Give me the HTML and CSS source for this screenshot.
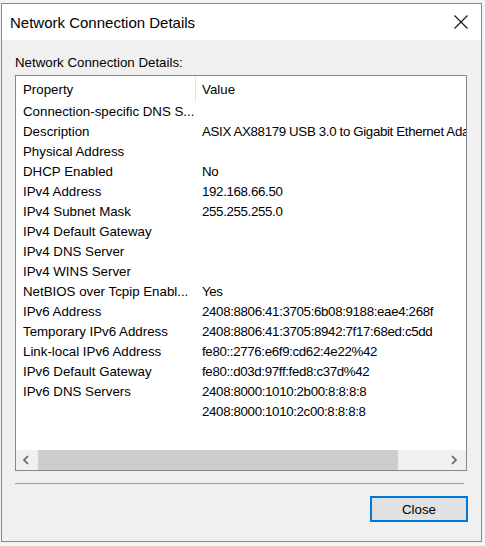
FILE: index.html
```html
<!DOCTYPE html>
<html>
<head>
<meta charset="utf-8">
<title>Network Connection Details</title>
<link rel="stylesheet" href="styles.css">
</head>
<body>
<div class="dialog">
  <div class="titlebar">
    <span class="title">Network Connection Details</span>
    <svg class="close-x" width="14" height="14" viewBox="0 0 14 14"><path d="M0.5 0.5 L13.5 13.5 M13.5 0.5 L0.5 13.5" stroke="#111" stroke-width="1.1" fill="none"/></svg>
  </div>
  <div class="content">
    <div class="label">Network Connection Details:</div>
    <div class="listbox">
      <div class="list">
        <div class="row header"><div class="c1">Property</div><div class="c2 hv">Value</div></div>
        <div class="row"><div class="c1">Connection-specific DNS S...</div><div class="c2"></div></div>
        <div class="row"><div class="c1">Description</div><div class="c2">ASIX AX88179 USB 3.0 to Gigabit Ethernet Adapter</div></div>
        <div class="row"><div class="c1">Physical Address</div><div class="c2"></div></div>
        <div class="row"><div class="c1">DHCP Enabled</div><div class="c2">No</div></div>
        <div class="row"><div class="c1">IPv4 Address</div><div class="c2">192.168.66.50</div></div>
        <div class="row"><div class="c1">IPv4 Subnet Mask</div><div class="c2">255.255.255.0</div></div>
        <div class="row"><div class="c1">IPv4 Default Gateway</div><div class="c2"></div></div>
        <div class="row"><div class="c1">IPv4 DNS Server</div><div class="c2"></div></div>
        <div class="row"><div class="c1">IPv4 WINS Server</div><div class="c2"></div></div>
        <div class="row"><div class="c1">NetBIOS over Tcpip Enabl...</div><div class="c2">Yes</div></div>
        <div class="row"><div class="c1">IPv6 Address</div><div class="c2">2408:8806:41:3705:6b08:9188:eae4:268f</div></div>
        <div class="row"><div class="c1">Temporary IPv6 Address</div><div class="c2">2408:8806:41:3705:8942:7f17:68ed:c5dd</div></div>
        <div class="row"><div class="c1">Link-local IPv6 Address</div><div class="c2">fe80::2776:e6f9:cd62:4e22%42</div></div>
        <div class="row"><div class="c1">IPv6 Default Gateway</div><div class="c2">fe80::d03d:97ff:fed8:c37d%42</div></div>
        <div class="row"><div class="c1">IPv6 DNS Servers</div><div class="c2">2408:8000:1010:2b00:8:8:8:8</div></div>
        <div class="row"><div class="c1"></div><div class="c2">2408:8000:1010:2c00:8:8:8:8</div></div>
      </div>
      <div class="hscroll">
        <div class="arrow left"><svg width="8" height="10" viewBox="0 0 8 10"><path d="M6 1 L2 5 L6 9" stroke="#606060" stroke-width="1.7" fill="none"/></svg></div>
        <div class="track"><div class="thumb"></div></div>
        <div class="arrow right"><svg width="8" height="10" viewBox="0 0 8 10"><path d="M2 1 L6 5 L2 9" stroke="#606060" stroke-width="1.7" fill="none"/></svg></div>
      </div>
    </div>
    <div class="sep"></div>
    <div class="actions"><button class="btn">Close</button></div>
  </div>
</div>
</body>
</html>
```

FILE: styles.css
```css
html, body {
  margin: 0;
  padding: 0;
}
body {
  background: #f3f3f3;
  width: 485px;
  height: 546px;
  overflow: hidden;
  font-family: "Liberation Sans", Arial, sans-serif;
  color: #000;
}
.dialog {
  box-sizing: border-box;
  margin: 3px 0 0 1px;
  width: 481px;
  height: 539px;
  border: 1px solid #888;
  background: #f0f0f0;
  display: flex;
  flex-direction: column;
}
.titlebar {
  height: 36px;
  flex: none;
  background: #fff;
  display: flex;
  align-items: center;
  justify-content: space-between;
  padding: 0 13px 0 8px;
}
.title {
  font-size: 15px;
  color: #000;
}
.close-x {
  display: block;
}
.content {
  flex: 1;
  display: flex;
  flex-direction: column;
  padding: 15px 13px 0 13px;
}
.label {
  font-size: 13.3px;
  line-height: 16px;
}
.listbox {
  box-sizing: border-box;
  margin-top: 4px;
  width: 452px;
  height: 396px;
  border: 1px solid #828790;
  background: #fff;
  display: flex;
  flex-direction: column;
}
.list {
  flex: 1;
  overflow: hidden;
  font-size: 13.3px;
}
.row {
  display: flex;
  height: 20px;
  line-height: 20px;
  white-space: nowrap;
}
.row.header {
  height: 26px;
  box-sizing: border-box;
  padding-top: 4px;
}
.c1 {
  box-sizing: border-box;
  flex: none;
  width: 180px;
  padding-left: 7px;
  overflow: hidden;
}
.header .c1 {
  border-right: 1px solid #e5e5e5;
  margin-top: -4px;
  padding-top: 4px;
  height: 26px;
}
.c2 {
  flex: none;
  padding-left: 6px;
  letter-spacing: -0.35px;
}
.c2.hv {
  letter-spacing: 0;
}
.hscroll {
  flex: none;
  height: 20px;
  display: flex;
  background: #f0f0f0;
}
.arrow {
  flex: none;
  display: flex;
  align-items: center;
}
.arrow.left {
  width: 22px;
  padding-left: 6px;
  box-sizing: border-box;
}
.arrow.right {
  width: 21px;
  padding-left: 5px;
  box-sizing: border-box;
}
.arrow svg {
  display: block;
}
.track {
  flex: 1;
  display: flex;
}
.thumb {
  width: 360px;
  background: #cdcdcd;
}
.sep {
  margin-top: 12px;
  width: 449px;
  height: 1px;
  background: #a0a0a0;
}
.actions {
  margin-top: 12px;
  display: flex;
  justify-content: flex-end;
}
.btn {
  box-sizing: border-box;
  width: 98px;
  height: 26px;
  border: 2px solid #0078d7;
  background: #e1e1e1;
  font-family: "Liberation Sans", Arial, sans-serif;
  font-size: 13.3px;
  color: #000;
  padding: 0;
  margin: 0;
}
```
